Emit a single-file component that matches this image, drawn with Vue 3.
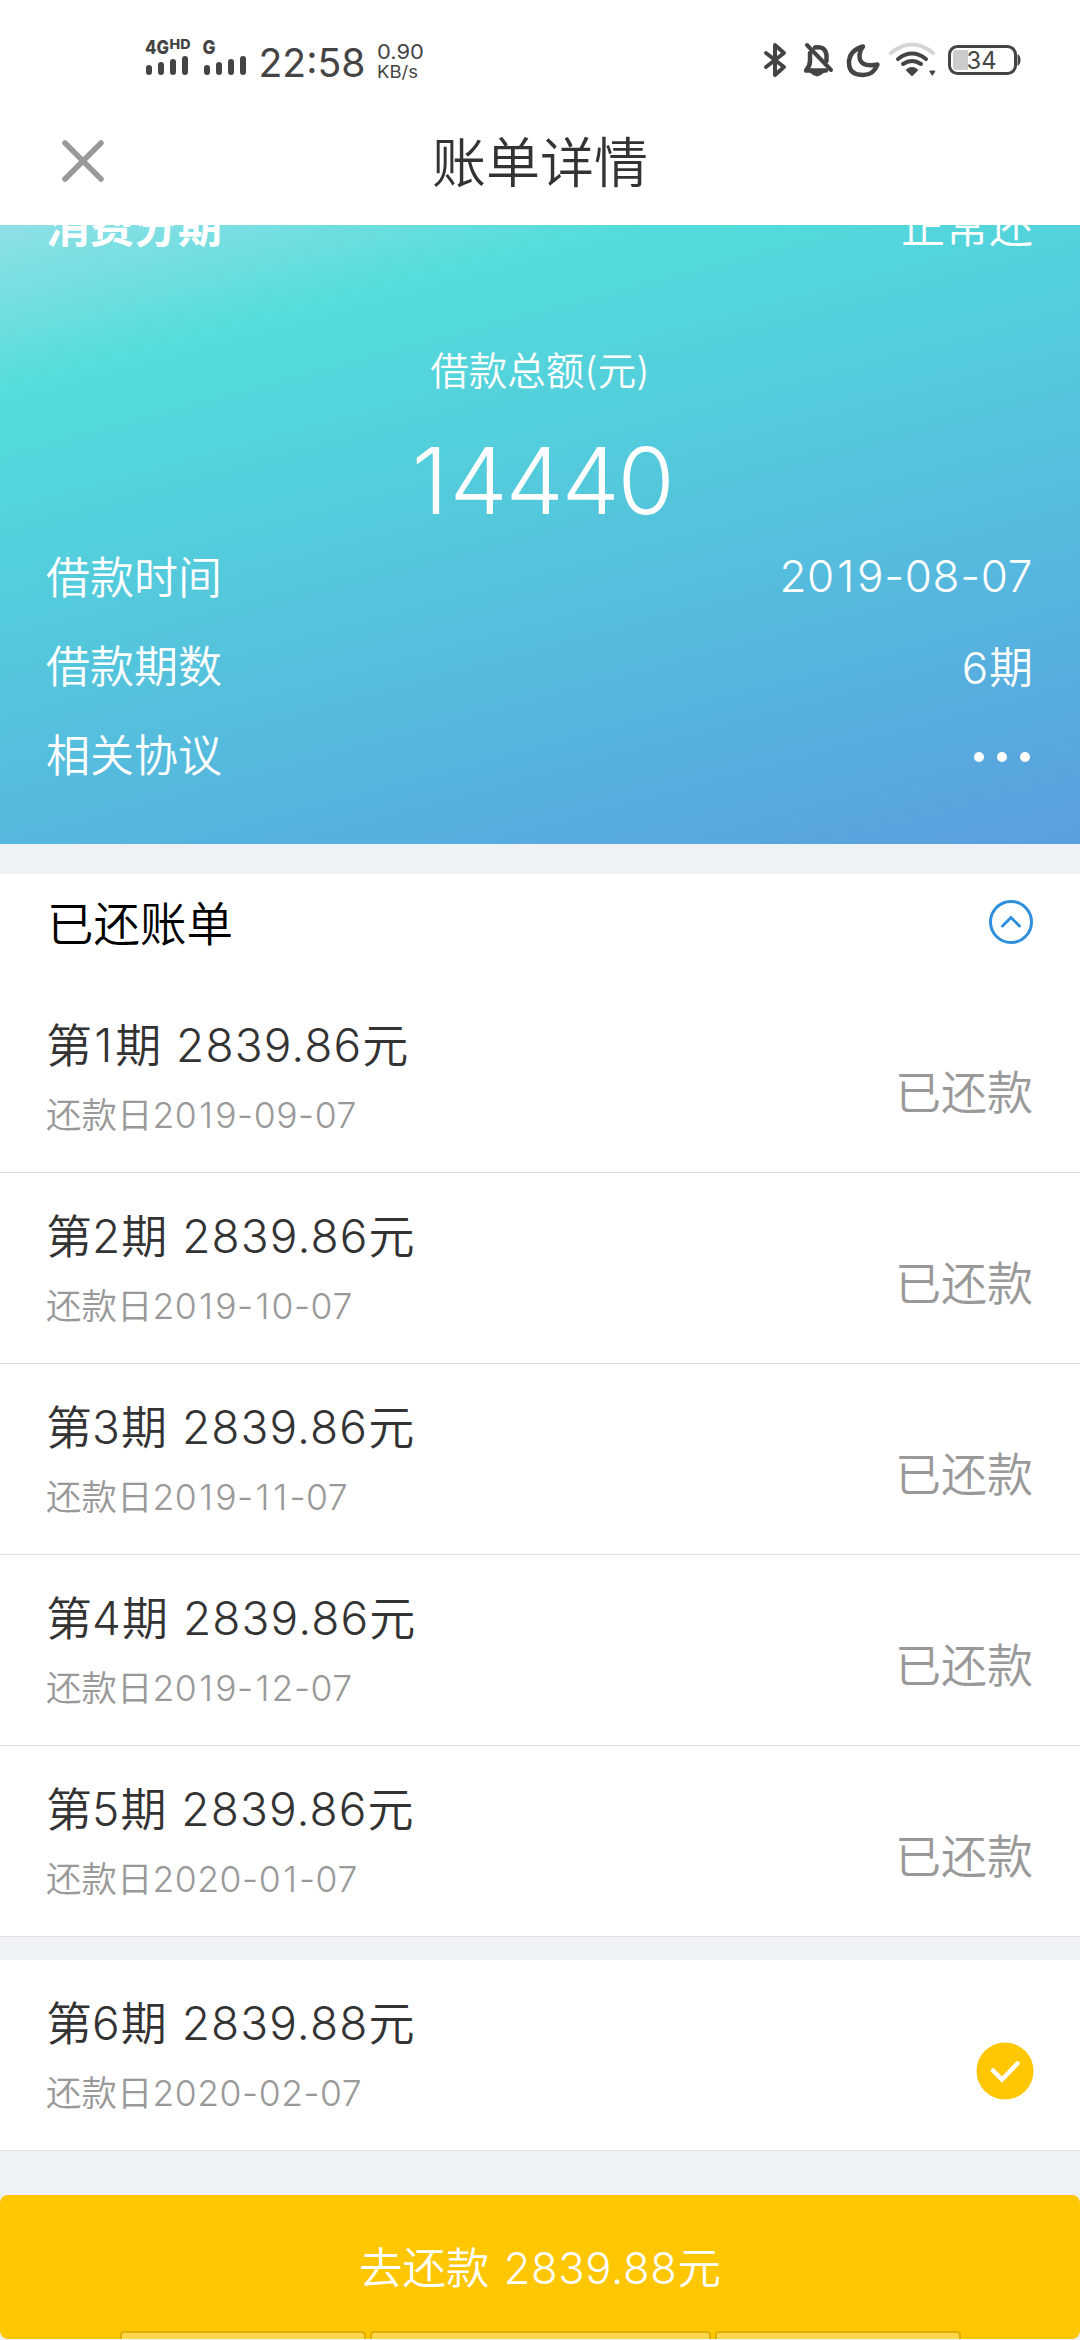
<script setup>
import { h } from 'vue'

// Splits a figure so that the narrow digit 1 can be given a little more room.
const Digits = (props) =>
  h(
    'span',
    { class: 'digits' },
    props.text.split(/(1)/).filter(Boolean).map((part) =>
      part === '1' ? h('span', { class: 'one' }, part) : part
    )
  )
Digits.props = ['text']

const loanRows = [
  { label: '借款时间', value: '2019-08-07', unit: '' },
  { label: '借款期数', value: '6', unit: '期' },
]

const paidBills = [
  { no: 1, amount: '2839.86', date: '2019-09-07' },
  { no: 2, amount: '2839.86', date: '2019-10-07' },
  { no: 3, amount: '2839.86', date: '2019-11-07' },
  { no: 4, amount: '2839.86', date: '2019-12-07' },
  { no: 5, amount: '2839.86', date: '2020-01-07' },
]

const currentBill = { no: 6, amount: '2839.88', date: '2020-02-07' }
</script>

<template>
  <div class="screen">
    <header class="status">
      <svg class="status-left" width="290" height="80" viewBox="0 0 290 80">
        <g fill="#444" font-weight="800">
          <text x="-1" y="34" font-size="19" textLength="24" lengthAdjust="spacingAndGlyphs">4G</text>
          <text x="23.500" y="29" font-size="13" textLength="21" lengthAdjust="spacingAndGlyphs">HD</text>
          <text x="56.500" y="34" font-size="19" textLength="13" lengthAdjust="spacingAndGlyphs">G</text>
        </g>
        <g stroke="#444" stroke-width="6" stroke-linecap="round">
          <path d="M3 48v4M15 45v7M27 42v10M39 39v13" />
          <path d="M61 48v4M73 45v7M85 42v10M97 39v13" />
        </g>
        <g fill="#444">
          <text x="112.500" y="56.500" font-size="39" textLength="107" lengthAdjust="spacingAndGlyphs">22:58</text>
          <text x="231" y="38.500" font-size="20" textLength="47" lengthAdjust="spacingAndGlyphs">0.90</text>
          <text x="231" y="57.500" font-size="17" textLength="41" lengthAdjust="spacingAndGlyphs">KB/s</text>
        </g>
      </svg>
      <svg class="status-right" width="290" height="80" viewBox="0 0 290 80" fill="none" stroke="#444" stroke-linecap="round" stroke-linejoin="round">
        <path d="M16 33L34 47L25 55V25L34 33L16 47" stroke-width="4" />
        <path d="M60 33v8q0 5-4 9.500h20M65 27.500q10-2 11.500 7.500v6" stroke-width="4.500" />
        <path d="M62 51.500q5 5 10 0" stroke-width="4.500" />
        <path d="M57 25l24 25" stroke-width="4" />
        <path d="M113 26.500q-14 4-14 16.500 0 12 14.500 12 10 0 14-10.500-19 3.500-18-10 .5-4.500 3.500-8z" stroke-width="4.500" />
        <path d="M141 33q21-17 42 0" stroke="#d5d5d5" stroke-width="4" />
        <path d="M148 39q14-11 28 0M153 44q9-6 18 0" stroke-width="4" />
        <path d="M157 50q5-4 10 0l-5 5z" fill="#444" stroke-width="2" />
        <path d="M180 51h5l-2.500 4z" fill="#444" stroke-width="1" />
        <rect x="199.500" y="26.500" width="66" height="27" rx="8" stroke-width="3" />
        <path d="M203 33q0-3 3-3h12v20h-12q-3 0-3-3z" fill="#ccc" stroke="none" />
        <path d="M267.500 34q3 1.500 3 6t-3 6z" fill="#444" stroke="none" />
        <text x="216.500" y="49" font-size="24" fill="#444" stroke="none" textLength="30" lengthAdjust="spacingAndGlyphs">34</text>
      </svg>
    </header>

    <nav class="nav">
      <svg class="close" width="42" height="42" viewBox="0 0 42 42" fill="none" stroke="#999" stroke-width="5.500" stroke-linecap="round">
        <path d="M3 3l36 36M39 3L3 39" />
      </svg>
      <h1 class="title">账单详情</h1>
    </nav>

    <section class="hero">
      <div class="line clipped">
        <b>消费分期</b>
        <span>正常还</span>
      </div>
      <p class="total-label">借款总额(元)</p>
      <p class="total"><Digits text="14440" /></p>
      <div v-for="row in loanRows" :key="row.label" class="line">
        <span>{{ row.label }}</span>
        <span class="value"><Digits :text="row.value" />{{ row.unit }}</span>
      </div>
      <div class="line">
        <span>相关协议</span>
        <span class="dots"><i /><i /><i /></span>
      </div>
    </section>

    <section class="paid">
      <div class="paid-head">
        <h2>已还账单</h2>
        <svg width="44" height="44" viewBox="0 0 44 44" fill="none" stroke="#2f8fdc" stroke-width="3">
          <circle cx="22" cy="22" r="20.500" />
          <path d="M13.500 26l8.500-8.500 8.500 8.500" stroke-linecap="round" />
        </svg>
      </div>
      <div v-for="bill in paidBills" :key="bill.no" class="bill">
        <div>
          <p class="bill-title">第<Digits :text="String(bill.no)" />期 <Digits :text="bill.amount" />元</p>
          <p class="bill-date">还款日<Digits :text="bill.date" /></p>
        </div>
        <span class="state">已还款</span>
      </div>
    </section>

    <section class="current">
      <div class="bill">
        <div>
          <p class="bill-title">第<Digits :text="String(currentBill.no)" />期 <Digits :text="currentBill.amount" />元</p>
          <p class="bill-date">还款日<Digits :text="currentBill.date" /></p>
        </div>
        <svg class="check" width="58" height="58" viewBox="0 0 58 58" fill="none">
          <circle cx="29" cy="29" r="28.500" fill="#ffc602" />
          <path d="M17 28.500L26 37.500L41.500 21.500" stroke="#fff" stroke-width="4.500" stroke-linecap="round" />
        </svg>
      </div>
    </section>

    <button class="pay">
      <span class="pay-text">去还款 <Digits :text="currentBill.amount" />元</span>
      <span class="tabs"><i /><i class="wide" /><i /></span>
    </button>
  </div>
</template>

<style>
body {
  margin: 0;
  background: #eff2f5;
}
</style>

<style scoped>
.screen {
  width: 1080px;
  height: 2340px;
  overflow: hidden;
  display: flex;
  flex-direction: column;
  background: #eff2f5;
  font-family: Inter, "Noto Sans CJK SC", sans-serif;
  font-weight: 350;
  color: #333;
}
p, h1, h2 {
  margin: 0;
  font-weight: inherit;
}
.screen :deep(.digits) {
  font-weight: 300;
  letter-spacing: 0.015em;
}
.screen :deep(.one) {
  letter-spacing: 0.06em;
  padding-left: 0.05em;
}
.status {
  height: 100px;
  flex: none;
  display: flex;
  justify-content: space-between;
  padding: 20px 40px 0 146px;
  box-sizing: border-box;
  background: #fff;
  font-weight: 400;
}
.status-left {
  overflow: visible;
}
.nav {
  height: 125px;
  flex: none;
  display: grid;
  grid-template-columns: 104px 1fr 104px;
  align-items: start;
  background: #fff;
}
.close {
  margin: 40px 0 0 62px;
}
.title {
  margin-top: 24px;
  text-align: center;
  font-size: 54px;
  line-height: 80px;
}
.hero {
  height: 619px;
  flex: none;
  overflow: hidden;
  color: #fff;
  background: linear-gradient(165deg, #8fe0e6 0%, #53dcdb 19%, #54c5dc 51%, #56b1df 76%, #5a9fde 100%);
}
.line {
  height: 89px;
  display: flex;
  align-items: center;
  justify-content: space-between;
  padding: 0 47px 0 46px;
  font-size: 44px;
}
.line.clipped {
  margin-top: -46px;
}
.line b {
  font-weight: 700;
}
.value {
  padding-top: 2px;
}
.total-label {
  margin-top: 75px;
  height: 56px;
  line-height: 56px;
  font-size: 38.5px;
  text-align: center;
}
.total {
  margin-top: 30px;
  height: 101px;
  line-height: 103px;
  font-size: 92px;
  text-align: center;
}
.total :deep(.digits) {
  letter-spacing: -0.02em;
}
.total :deep(.one) {
  letter-spacing: 0.02em;
}
.dots {
  display: flex;
  gap: 13px;
  padding: 8px 3px 0 0;
}
.dots i {
  width: 10px;
  height: 10px;
  border-radius: 50%;
  background: #fff;
}
.paid {
  flex: none;
  margin-top: 30px;
  background: #fff;
}
.paid-head {
  height: 108px;
  display: flex;
  align-items: flex-start;
  justify-content: space-between;
  padding: 0 47px 0 47px;
  color: #000;
}
.paid-head h2 {
  font-size: 46.5px;
  line-height: 100px;
}
.paid-head svg {
  margin-top: 26px;
}
.bill {
  height: 191px;
  box-sizing: border-box;
  display: flex;
  justify-content: space-between;
  padding: 30px 47px 0 46px;
  border-bottom: 1px solid #dfdfe1;
}
.bill-title {
  font-size: 46px;
  line-height: 66px;
  word-spacing: 2px;
}
.bill-title :deep(.digits) {
  letter-spacing: 0.024em;
}
.bill-date {
  margin-top: 10px;
  font-size: 35.5px;
  line-height: 56px;
  color: #999;
}
.state {
  padding-top: 47px;
  font-size: 46px;
  line-height: 66px;
  color: #999;
}
.current {
  flex: none;
  margin-top: 23px;
  background: #fff;
}
.check {
  margin: 52px -1px 0 0;
}
.pay {
  height: 144px;
  flex: none;
  margin-top: 44px;
  padding: 0;
  border: 0;
  border-radius: 8px;
  display: flex;
  flex-direction: column;
  align-items: center;
  justify-content: space-between;
  overflow: hidden;
  background: #ffc602;
  color: #fff;
  font: inherit;
}
.pay-text {
  font-size: 43.5px;
  line-height: 146px;
  height: 136px;
  word-spacing: 2px;
}
.tabs {
  display: flex;
  gap: 4px;
  height: 8px;
}
.tabs i {
  width: 246px;
  height: 8px;
  box-sizing: border-box;
  border: 2px solid #e0ae05;
  border-bottom: 0;
  border-radius: 4px 4px 0 0;
  background: #fed64c;
}
.tabs i.wide {
  width: 341px;
}
</style>
